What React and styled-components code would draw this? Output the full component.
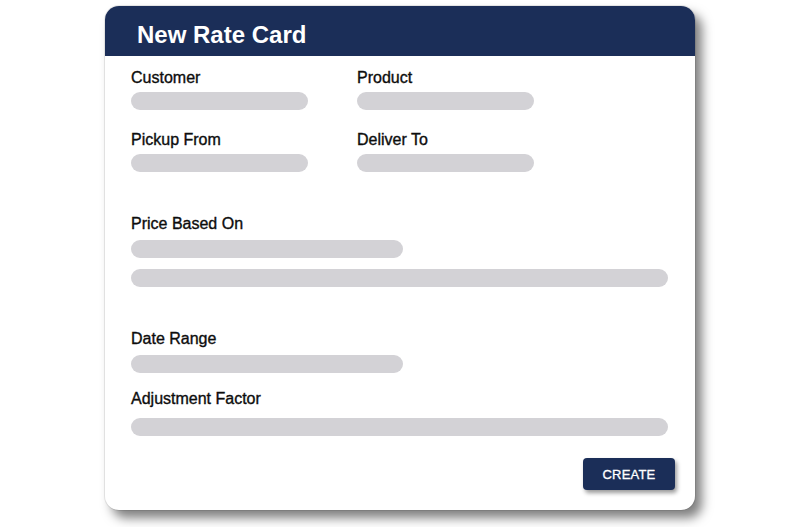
import React from "react";
import styled, { createGlobalStyle } from "styled-components";

const GlobalStyle = createGlobalStyle`
  html, body {
    margin: 0;
    padding: 0;
    background: #fff;
  }
  body {
    font-family: "Liberation Sans", Arial, Helvetica, sans-serif;
  }
`;

const Page = styled.div`
  width: 800px;
  height: 527px;
  padding: 6px 0 0 105px;
  box-sizing: border-box;
`;

const Card = styled.div`
  width: 590px;
  height: 504px;
  box-sizing: border-box;
  background: #fff;
  border-radius: 14px;
  overflow: hidden;
  display: flex;
  flex-direction: column;
  box-shadow: 0 0 0 1px rgba(0, 0, 0, 0.08), 7px 8px 11px rgba(0, 0, 0, 0.5);
`;

const Header = styled.div`
  height: 50px;
  flex: none;
  background: #1b2e58;
  display: flex;
  align-items: center;
  padding: 7px 0 0 32px;
  box-sizing: border-box;
  h2 {
    margin: 0;
    color: #fff;
    font-size: 24px;
    font-weight: 700;
    line-height: 28px;
  }
`;

const Body = styled.div`
  flex: 1;
  padding: 12px 27px 20px 26px;
  display: flex;
  flex-direction: column;
`;

const Row = styled.div`
  display: grid;
  grid-template-columns: 226px 1fr;
  margin-top: ${(p) => p.$top || 0}px;
`;

const Field = styled.div`
  display: flex;
  flex-direction: column;
  gap: ${(p) => p.$gap || 6}px;
  margin-top: ${(p) => p.$top || 0}px;
`;

const Label = styled.label`
  font-size: 16px;
  line-height: 20px;
  color: #0d0d0d;
  -webkit-text-stroke: 0.35px #0d0d0d;
`;

const Bar = styled.div`
  height: 18px;
  width: ${(p) => (p.$w ? `${p.$w}px` : "100%")};
  border-radius: 9px;
  background: #d3d2d6;
  margin-top: ${(p) => p.$top || 0}px;
`;

const Footer = styled.div`
  display: flex;
  justify-content: flex-end;
  margin-top: 22px;
  margin-right: -7px;
`;

const CreateButton = styled.button`
  width: 92px;
  height: 32px;
  border: none;
  border-radius: 4px;
  background: #1b2e58;
  color: #fff;
  font-family: "Liberation Sans", Arial, sans-serif;
  font-size: 13px;
  letter-spacing: 0.2px;
  -webkit-text-stroke: 0.3px #fff;
  box-shadow: 2px 3px 4px rgba(0, 0, 0, 0.4);
  cursor: pointer;
`;

const App = () => {
  return (
    <>
      <GlobalStyle />
      <Page>
        <Card>
          <Header>
            <h2>New Rate Card</h2>
          </Header>
          <Body>
            <Row>
              <Field $gap={4}>
                <Label>Customer</Label>
                <Bar $w={177} />
              </Field>
              <Field $gap={4}>
                <Label>Product</Label>
                <Bar $w={177} />
              </Field>
            </Row>
            <Row $top={20}>
              <Field $gap={4}>
                <Label>Pickup From</Label>
                <Bar $w={177} />
              </Field>
              <Field $gap={4}>
                <Label>Deliver To</Label>
                <Bar $w={177} />
              </Field>
            </Row>
            <Field $top={42} $gap={6}>
              <Label>Price Based On</Label>
              <Bar $w={272} />
              <Bar $top={5} />
            </Field>
            <Field $top={42} $gap={6}>
              <Label>Date Range</Label>
              <Bar $w={272} />
            </Field>
            <Field $top={16} $gap={9}>
              <Label>Adjustment Factor</Label>
              <Bar />
            </Field>
            <Footer>
              <CreateButton>CREATE</CreateButton>
            </Footer>
          </Body>
        </Card>
      </Page>
    </>
  );
};

export default App;
